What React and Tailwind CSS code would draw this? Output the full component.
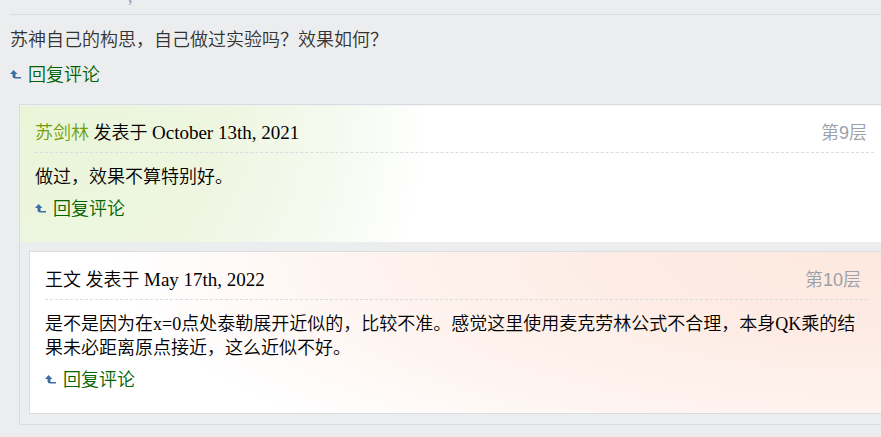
import React from "react";

function ReplyLink() {
  return (
    <a href="#reply" className="flex items-center gap-[6px] leading-6 text-[#006400]">
      <svg width="12" height="12" viewBox="0 0 12 12" aria-hidden="true">
        <path d="M3.5 1 L7.5 5 H5.5 V7.5 Q5.5 8 6 8 H11 V9.5 H5.5 Q2.5 9.5 2.5 7 V5 H0 Z" fill="#3b6ea5" />
      </svg>
      回复评论
    </a>
  );
}

function CommentHeader({ author, date, floor }) {
  return (
    <header className="flex justify-between border-b border-dashed border-[#dadde0] pb-[7px] leading-6">
      <p>
        {author} 发表于 <time className="text-[19px]">{date}</time>
      </p>
      <span className="pr-[7px] font-['Liberation_Sans','Noto_Sans_CJK_SC',sans-serif] text-[#9ba1a9]">{floor}</span>
    </header>
  );
}

export default function App() {
  return (
    <main className="min-h-screen overflow-hidden bg-[#ecedef] font-['Liberation_Serif','Noto_Sans_CJK_SC',serif] text-lg font-[350] text-black">
      <div className="ml-[10px] flex h-[15px] items-end border-b border-[#dadbde] pl-[118px] leading-9 text-[#7d9bb5]">
        ,
      </div>
      <section className="pt-[13px] pl-[10px]">
        <p className="leading-6 text-[#333]">苏神自己的构思，自己做过实验吗？效果如何？</p>
        <div className="mt-[11px] flex">
          <ReplyLink />
        </div>
      </section>

      <div className="mt-[17px] ml-[19px] border-y border-l border-[#dadde0] pb-[10px]">
        <article className="border-t border-[#f1f2f3] bg-[radial-gradient(ellipse_410px_400px_at_0px_0px,#eaf5d8_0%,#eef6e1_50%,#f5faf0_78%,#ffffff_100%)] pt-[15px] pr-[7px] pb-[21px] pl-[15px]">
          <CommentHeader
            author={<a href="#author" className="text-[#6f9f0b]">苏剑林</a>}
            date="October 13th, 2021"
            floor="第9层"
          />
          <p className="mt-3 leading-6">做过，效果不算特别好。</p>
          <div className="mt-2 flex">
            <ReplyLink />
          </div>
        </article>
        <article className="mt-[9px] ml-[9px] border-y border-l border-[#dadde0] bg-[radial-gradient(ellipse_770px_250px_at_100%_0px,#fde8de_0%,#fdece5_35%,#fef4f0_70%,#ffffff_100%)] pt-[16px] pr-[13px] pb-[21px] pl-[15px]">
          <CommentHeader author="王文" date="May 17th, 2022" floor="第10层" />
          <p className="mt-3 leading-6">
            是不是因为在x=0点处泰勒展开近似的，比较不准。感觉这里使用麦克劳林公式不合理，本身QK乘的结果未必距离原点接近，这么近似不好。
          </p>
          <div className="mt-2 flex">
            <ReplyLink />
          </div>
        </article>
      </div>
    </main>
  );
}
